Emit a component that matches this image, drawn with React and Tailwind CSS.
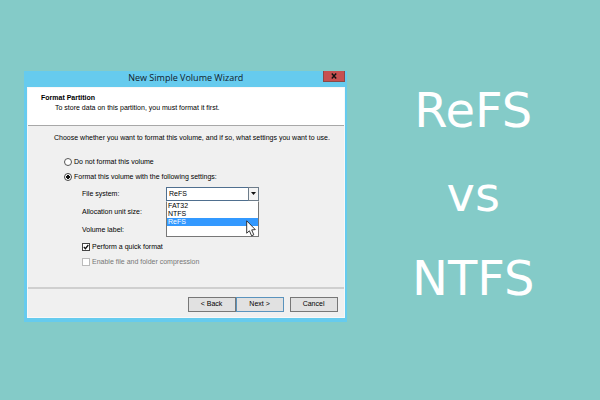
import React from 'react'

const fileSystems = ['FAT32', 'NTFS', 'ReFS']

const buttonClass =
  'h-[15px] w-12 border bg-[#e1e1e1] text-center leading-[12px] text-black'

function Cursor() {
  return (
    <svg viewBox="0 0 10 17" className="absolute top-[19px] left-20 h-[17px] w-[10px]">
      <path
        d="M0.7 0.8 L0.7 13.2 L3.4 10.8 L5.6 15.8 L7.8 14.8 L5.7 9.9 L9.3 9.6 Z"
        fill="#fff"
        stroke="#222"
        strokeWidth="0.9"
      />
    </svg>
  )
}

function FileSystemSelect() {
  return (
    <div className="relative h-[14px] w-[93px]">
      <select
        id="file-system"
        defaultValue="ReFS"
        className="block h-[14px] w-full appearance-none border border-[#4f6f8f] bg-white pl-0.5 leading-[12px]"
      >
        {fileSystems.map((name) => (
          <option key={name}>{name}</option>
        ))}
      </select>
      <span className="pointer-events-none absolute top-0 right-0 flex h-[14px] w-[11px] items-center justify-center border border-[#6d7c8a] bg-[#f4f4f4]">
        <svg viewBox="0 0 5 3" className="h-[3px] w-[5px]">
          <path d="M0 0 H5 L2.5 3 Z" fill="#111" />
        </svg>
      </span>

      <div className="absolute top-[14px] left-0 z-10 w-full">
        <ul className="border-x border-t border-x-[#777] border-t-white bg-white leading-[8px]">
          {fileSystems.map((name) => (
            <li
              key={name}
              className={name === 'ReFS' ? 'bg-[#3399ff] pl-px text-white' : 'pl-px'}
            >
              {name}
            </li>
          ))}
        </ul>
        <Cursor />
      </div>
    </div>
  )
}

function Wizard() {
  return (
    <section className="min-w-0 flex-1 bg-[#66cbee] pr-0.5 pb-1 pl-[3px] font-['Liberation_Sans',Arial,sans-serif] text-[7px] leading-[10px] text-black">
      <header className="relative flex h-4 items-start justify-center">
        <h2 className="font-['Open_Sans',sans-serif] text-[9px] leading-[14px] text-[#10202c]">
          New Simple Volume Wizard
        </h2>
        <button
          aria-label="Close"
          className="absolute top-0 right-0 flex h-[11px] w-[22px] items-center justify-center border border-t-0 border-[#8a4a48] bg-[#c75050]"
        >
          <svg viewBox="0 0 6 6" className="h-[6px] w-[6px]">
            <path d="M0.8 0.5 L5.2 5.5 M5.2 0.5 L0.8 5.5" stroke="#111" strokeWidth="1.4" />
          </svg>
        </button>
      </header>

      <div className="border border-[#f8f8f8] bg-[#f0f0f0]">
        <div className="h-[38px] border-b border-[#a8a8a8] bg-white pt-[5px] pl-[13px]">
          <h3 className="font-bold">Format Partition</h3>
          <p className="pl-[14px]">To store data on this partition, you must format it first.</p>
        </div>

        <form className="h-[161px] pt-[7px] pl-[26px]">
          <p>Choose whether you want to format this volume, and if so, what settings you want to use.</p>

          <div className="mt-[14px] flex flex-col gap-[5px] pl-[10px]">
            <label className="flex items-center gap-0.5">
              <input
                type="radio"
                name="format"
                className="size-2 appearance-none rounded-full border border-[#555] bg-white"
              />
              Do not format this volume
            </label>
            <label className="flex items-center gap-0.5">
              <input
                type="radio"
                name="format"
                defaultChecked
                className="size-2 appearance-none rounded-full border border-[#444] bg-white bg-[radial-gradient(circle,#111_2px,transparent_2px)]"
              />
              Format this volume with the following settings:
            </label>
          </div>

          <div className="mt-[5px] grid grid-cols-[84px_93px] items-center gap-y-1 pl-7">
            <label htmlFor="file-system">File system:</label>
            <FileSystemSelect />
            <label htmlFor="unit-size">Allocation unit size:</label>
            <select
              id="unit-size"
              className="h-[14px] w-full appearance-none border border-[#777] bg-white"
            />
            <label htmlFor="volume-label">Volume label:</label>
            <input id="volume-label" className="h-[14px] w-full border border-[#777] bg-white pl-0.5" />
          </div>

          <div className="mt-[5px] flex flex-col gap-[5px] pl-7">
            <label className="flex items-center gap-0.5">
              <span className="relative flex size-2">
                <input
                  type="checkbox"
                  defaultChecked
                  className="size-2 appearance-none border border-[#444] bg-white"
                />
                <svg viewBox="0 0 8 8" className="pointer-events-none absolute inset-0 size-2">
                  <path d="M1.8 3.8 L3.4 5.7 L6.3 2" fill="none" stroke="#111" strokeWidth="1.3" />
                </svg>
              </span>
              Perform a quick format
            </label>
            <label className="flex items-center gap-0.5 text-[#777]">
              <input
                type="checkbox"
                disabled
                className="size-2 appearance-none border border-[#bbb] bg-white"
              />
              Enable file and folder compression
            </label>
          </div>
        </form>

        <footer className="flex h-[30px] justify-end border-t-2 border-[#cfcfcf] pt-2 pr-1.5">
          <button className={`${buttonClass} border-[#777]`}>&lt; Back</button>
          <button className={`${buttonClass} border-[#5a93bd]`}>Next &gt;</button>
          <button className={`${buttonClass} ml-1.5 border-[#777]`}>Cancel</button>
        </footer>
      </div>
    </section>
  )
}

export default function App() {
  return (
    <main className="flex min-h-screen w-full items-center bg-[#84cbc8] pb-2 pl-6">
      <Wizard />
      <h1 className="flex w-[44%] flex-col pb-1 text-center font-['DejaVu_Sans',Verdana,sans-serif] text-5xl leading-[84px] text-white">
        <span>ReFS</span>
        <span>vs</span>
        <span>NTFS</span>
      </h1>
    </main>
  )
}
